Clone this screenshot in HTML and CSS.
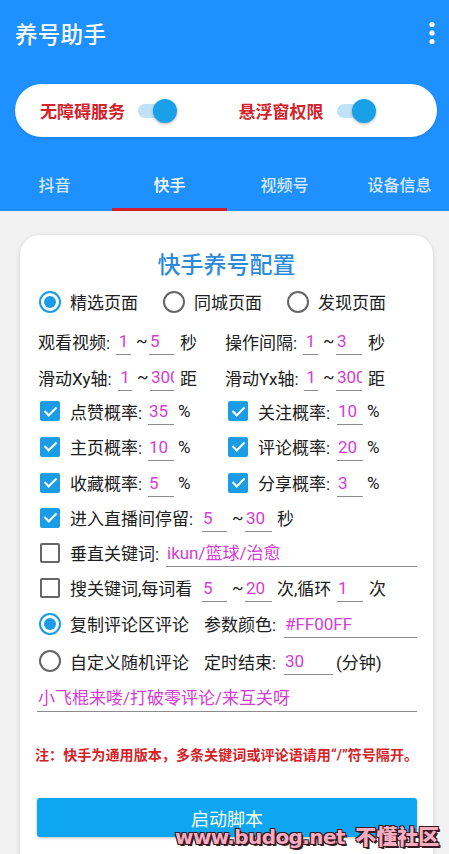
FILE: index.html
```html
<!DOCTYPE html>
<html lang="zh-CN">
<head>
<meta charset="utf-8">
<title>养号助手</title>
<link rel="stylesheet" href="styles.css">
</head>
<body>
<div class="screen">
  <header class="appbar">
    <div class="toolbar">
      <h1 class="app-title">养号助手</h1>
      <svg class="more" width="8" height="24" viewBox="0 0 8 24"><circle cx="4" cy="3.5" r="2.6" fill="#fff"/><circle cx="4" cy="12" r="2.6" fill="#fff"/><circle cx="4" cy="20.5" r="2.6" fill="#fff"/></svg>
    </div>
    <div class="perm-card">
      <div class="perm">
        <span class="perm-label">无障碍服务</span>
        <span class="switch"><span class="track"></span><span class="thumb"></span></span>
      </div>
      <div class="perm">
        <span class="perm-label">悬浮窗权限</span>
        <span class="switch"><span class="track"></span><span class="thumb"></span></span>
      </div>
    </div>
    <nav class="tabs">
      <span class="tab">抖音</span>
      <span class="tab active">快手</span>
      <span class="tab">视频号</span>
      <span class="tab">设备信息</span>
    </nav>
  </header>

  <main class="card">
    <h2 class="card-title">快手养号配置</h2>
    <div class="rows">
      <div class="row radios">
        <label class="ritem"><span class="radio on"></span><span>精选页面</span></label>
        <label class="ritem"><span class="radio"></span><span>同城页面</span></label>
        <label class="ritem"><span class="radio"></span><span>发现页面</span></label>
      </div>

      <div class="row">
        <div class="cell">
          <span class="lbl w78">观看视频:</span><span class="fld w15 c">1</span><span class="tilde">~</span><span class="fld w25">5</span><span class="suf">秒</span>
        </div>
        <div class="cell">
          <span class="lbl w78">操作间隔:</span><span class="fld w15 c">1</span><span class="tilde">~</span><span class="fld w26">3</span><span class="suf">秒</span>
        </div>
      </div>

      <div class="row">
        <div class="cell">
          <span class="lbl w80">滑动Xy轴:</span><span class="fld w14 c">1</span><span class="tilde">~</span><span class="fld w24">300</span><span class="suf">距</span>
        </div>
        <div class="cell">
          <span class="lbl w79">滑动Yx轴:</span><span class="fld w14 c">1</span><span class="tilde">~</span><span class="fld w26">300</span><span class="suf">距</span>
        </div>
      </div>

      <div class="row">
        <div class="cell">
          <span class="cb on"></span><span class="lbl w78">点赞概率:</span><span class="fld w26">35</span><span class="suf s4">%</span>
        </div>
        <div class="cell cell-r">
          <span class="cb on"></span><span class="lbl w79">关注概率:</span><span class="fld w26">10</span><span class="suf s4">%</span>
        </div>
      </div>

      <div class="row">
        <div class="cell">
          <span class="cb on"></span><span class="lbl w78">主页概率:</span><span class="fld w26">10</span><span class="suf s4">%</span>
        </div>
        <div class="cell cell-r">
          <span class="cb on"></span><span class="lbl w79">评论概率:</span><span class="fld w26">20</span><span class="suf s4">%</span>
        </div>
      </div>

      <div class="row">
        <div class="cell">
          <span class="cb on"></span><span class="lbl w78">收藏概率:</span><span class="fld w26">5</span><span class="suf s4">%</span>
        </div>
        <div class="cell cell-r">
          <span class="cb on"></span><span class="lbl w79">分享概率:</span><span class="fld w26">3</span><span class="suf s4">%</span>
        </div>
      </div>

      <div class="row">
        <span class="cb on"></span><span class="lbl w132">进入直播间停留:</span><span class="fld w25">5</span><span class="tilde">~</span><span class="fld w27">30</span><span class="suf s5">秒</span>
      </div>

      <div class="row">
        <span class="cb"></span><span class="lbl w96">垂直关键词:</span><span class="fld grow">ikun/篮球/治愈</span>
      </div>

      <div class="row">
        <span class="cb"></span><span class="lbl w132">搜关键词,每词看</span><span class="fld w25">5</span><span class="tilde">~</span><span class="fld w27">20</span><span class="lbl w60 s5">次,循环</span><span class="fld w26">1</span><span class="suf">次</span>
      </div>

      <div class="row">
        <span class="radio on"></span><span class="lbl w143 g9">复制评论区评论</span><span class="lbl w80">参数颜色:</span><span class="fld grow">#FF00FF</span>
      </div>

      <div class="row">
        <span class="radio"></span><span class="lbl w143 g9">自定义随机评论</span><span class="lbl w80">定时结束:</span><span class="fld w49">30</span><span class="suf s3">(分钟)</span>
      </div>

      <div class="row">
        <span class="fld grow full">小飞棍来喽/打破零评论/来互关呀</span>
      </div>
    </div>

    <p class="note">注：快手为通用版本，多条关键词或评论语请用“/”符号隔开。</p>
    <button class="start">启动脚本</button>
  </main>

  <div class="watermark">www.budog.net <span class="wm-cn">不懂社区</span></div>
</div>
</body>
</html>
```

FILE: styles.css
```css
* { box-sizing: border-box; }

html, body {
  margin: 0;
  padding: 0;
}

body {
  width: 449px;
  height: 854px;
  overflow: hidden;
  background: #f2f2f2;
  font-family: Roboto, "Noto Sans CJK SC", "Noto Sans", sans-serif;
  color: #202020;
}

.screen {
  position: relative;
  width: 449px;
  height: 854px;
  overflow: hidden;
}

/* ---------- header ---------- */
.appbar {
  background: #1e90ff;
  display: flex;
  flex-direction: column;
}

.toolbar {
  height: 66px;
  display: flex;
  align-items: center;
  justify-content: space-between;
  padding: 0 15px 0 15px;
}

.app-title {
  margin: 0;
  color: #fff;
  font-size: 22.5px;
  font-weight: 500;
  letter-spacing: 0.3px;
  font-family: "Noto Sans CJK SC", sans-serif;
}

.more { margin-right: -2px; }

.perm-card {
  margin: 18px 12px 0 15px;
  height: 53px;
  background: #fff;
  border-radius: 27px;
  display: flex;
  align-items: center;
  padding-left: 25px;
  box-shadow: 0 1px 3px rgba(0, 0, 0, 0.12);
}

.perm {
  width: 200px;
  display: flex;
  align-items: center;
}

.perm-label {
  color: #d2232c;
  font-size: 17px;
  font-weight: 700;
  font-family: "Noto Sans CJK SC", sans-serif;
  width: 98px;
}

.switch {
  position: relative;
  width: 40px;
  height: 24px;
  display: inline-block;
}

.track {
  position: absolute;
  left: 0;
  top: 5px;
  width: 33px;
  height: 14px;
  border-radius: 7px;
  background: #bfe2f7;
}

.thumb {
  position: absolute;
  left: 15px;
  top: 0;
  width: 24px;
  height: 24px;
  border-radius: 50%;
  background: #18a0e8;
  box-shadow: 0 1px 3px rgba(0, 0, 0, 0.3);
}

.tabs {
  margin-top: 22px;
  margin-left: -3px;
  display: flex;
  height: 52px;
}

.tab {
  flex: 0 0 115px;
  display: flex;
  align-items: center;
  justify-content: center;
  color: #d6e8ff;
  font-size: 16px;
  font-weight: 500;
  font-family: "Noto Sans CJK SC", sans-serif;
  border-bottom: 3px solid transparent;
}

.tab.active {
  color: #fff;
  border-bottom-color: #d21f2c;
}

/* ---------- card ---------- */
.card {
  margin: 24px 16px 0 20px;
  height: 640px;
  background: #fff;
  border-radius: 20px;
  box-shadow: 0 1px 4px rgba(0, 0, 0, 0.16);
  padding: 10px 16px 0 18px;
  display: flex;
  flex-direction: column;
}

.card-title {
  margin: 0 0 0 -2px;
  height: 36px;
  line-height: 36px;
  text-align: center;
  color: #2c8ad9;
  font-size: 23px;
  font-weight: 500;
  font-family: "Noto Sans CJK SC", sans-serif;
}

.rows {
  display: grid;
  grid-template-rows: 41px 38px 34px 34px 37px 35px 35px 35px 35px 37px 38px 36px;
  font-size: 17px;
}

.row {
  display: flex;
  align-items: center;
  white-space: nowrap;
}

.cell {
  width: 187px;
  display: flex;
  align-items: center;
}

.cell-r .cb { margin-left: 3px; }

.radios .ritem {
  width: 124px;
  display: flex;
  align-items: center;
  gap: 9px;
  padding-left: 1px;
}

.radio {
  width: 22px;
  height: 22px;
  border-radius: 50%;
  border: 2px solid #666;
  flex: 0 0 22px;
  position: relative;
}

.radio.on {
  border-color: #1a9de6;
}

.radio.on::after {
  content: "";
  position: absolute;
  left: 3px;
  top: 3px;
  width: 12px;
  height: 12px;
  border-radius: 50%;
  background: #1a9de6;
}

.row > .radio { margin-left: 1px; }
.g9 { margin-left: 9px; }

.cb {
  flex: 0 0 20px;
  width: 20px;
  height: 20px;
  margin-left: 2px;
  margin-right: 10px;
  border-radius: 2px;
  border: 2px solid #666;
  position: relative;
}

.cb.on {
  background: #1a9de6;
  border-color: #1a9de6;
}

.cb.on::after {
  content: "";
  position: absolute;
  left: 4.5px;
  top: 0.5px;
  width: 5px;
  height: 10px;
  border-right: 2px solid #fff;
  border-bottom: 2px solid #fff;
  transform: rotate(45deg);
}

.lbl { display: inline-block; flex: 0 0 auto; }
.w60 { width: 60px; }
.w78 { width: 78px; }
.w79 { width: 79px; }
.w80 { width: 80px; }
.w96 { width: 96px; }
.w132 { width: 132px; }
.w143 { width: 134px; }

.fld {
  display: inline-block;
  height: 27px;
  line-height: 26px;
  margin-top: 1px;
  border-bottom: 1.5px solid #8c8c8c;
  color: #d53cd5;
  padding-left: 1px;
  overflow: hidden;
  flex: 0 0 auto;
}

.fld.c { text-align: center; padding-left: 0; }
.w14 { width: 14px; }
.w15 { width: 15px; }
.w24 { width: 24px; }
.w25 { width: 25px; }
.w26 { width: 26px; }
.w27 { width: 27px; }
.w49 { width: 49px; }
.grow { flex: 1 1 auto; }
.full { margin-left: -1px; }

.tilde {
  width: 18px;
  padding-left: 5px;
  flex: 0 0 18px;
}

.suf { margin-left: 6px; }
.s3 { margin-left: 3px; }
.s4 { margin-left: 4px; }
.s5 { margin-left: 5px; }

.note {
  margin: 29px 0 0 -3px;
  height: 20px;
  line-height: 20px;
  color: #d42328;
  font-size: 14.1px;
  font-weight: 700;
  font-family: Roboto, "Noto Sans CJK SC", sans-serif;
  white-space: nowrap;
}

.start {
  margin: 33px 0 0 -1px;
  height: 39px;
  width: 380px;
  border: none;
  border-radius: 3px;
  background: #0ea6f2;
  color: #fff;
  font-size: 18px;
  font-family: "Noto Sans CJK SC", sans-serif;
  box-shadow: 0 1px 3px rgba(0, 0, 0, 0.25);
  padding: 0;
}

/* ---------- watermark overlay ---------- */
.watermark {
  position: absolute;
  left: 175px;
  top: 820px;
  font-family: "DejaVu Sans", sans-serif;
  font-weight: 900;
  font-size: 20px;
  letter-spacing: -0.6px;
  color: #f6adc0;
  white-space: nowrap;
  text-shadow:
    1px 1px 0 #3a1a22, -1px -1px 0 #3a1a22, 1px -1px 0 #3a1a22, -1px 1px 0 #3a1a22,
    2px 2px 0 #3a1a22;
}

.wm-cn {
  font-family: "Noto Sans CJK SC", sans-serif;
  font-size: 21px;
  font-weight: 900;
  letter-spacing: 0;
  margin-left: 4px;
}
```
